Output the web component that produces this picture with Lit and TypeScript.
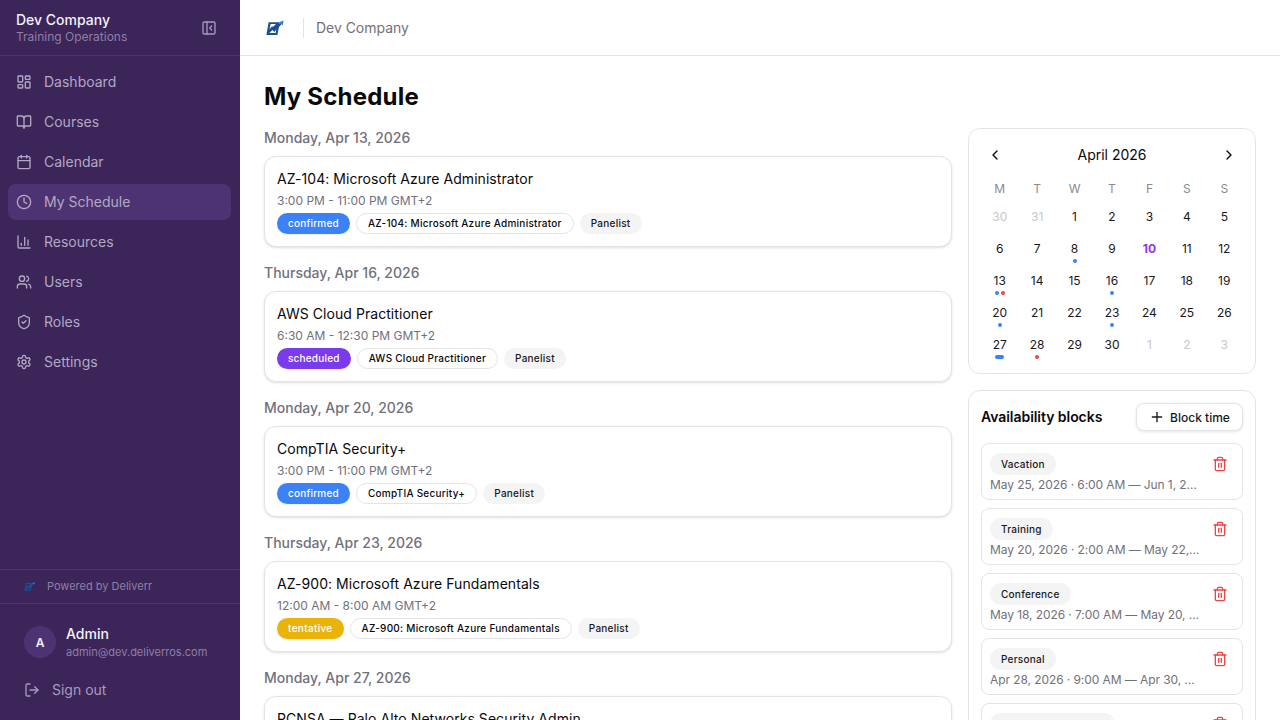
import { LitElement, html, css, svg } from "lit";
import { customElement } from "lit/decorators.js";

const ic = (body: unknown, size = 16) => html`<svg class="ic" width=${size} height=${size} viewBox="0 0 24 24" fill="none" stroke="currentColor" stroke-width="2" stroke-linecap="round" stroke-linejoin="round">${body}</svg>`;

const icons: Record<string, unknown> = {
  dashboard: svg`<rect x="3" y="3" width="7" height="9" rx="1"/><rect x="14" y="3" width="7" height="5" rx="1"/><rect x="14" y="12" width="7" height="9" rx="1"/><rect x="3" y="16" width="7" height="5" rx="1"/>`,
  book: svg`<path d="M12 7v14"/><path d="M3 18a1 1 0 0 1-1-1V4a1 1 0 0 1 1-1h5a4 4 0 0 1 4 4 4 4 0 0 1 4-4h5a1 1 0 0 1 1 1v13a1 1 0 0 1-1 1h-6a3 3 0 0 0-3 3 3 3 0 0 0-3-3z"/>`,
  calendar: svg`<path d="M8 2v4"/><path d="M16 2v4"/><rect x="3" y="4" width="18" height="18" rx="2"/><path d="M3 10h18"/>`,
  clock: svg`<circle cx="12" cy="12" r="10"/><polyline points="12 6 12 12 16 14"/>`,
  chart: svg`<path d="M3 3v16a2 2 0 0 0 2 2h16"/><path d="M18 17V9"/><path d="M13 17V5"/><path d="M8 17v-3"/>`,
  users: svg`<path d="M16 21v-2a4 4 0 0 0-4-4H6a4 4 0 0 0-4 4v2"/><circle cx="9" cy="7" r="4"/><path d="M22 21v-2a4 4 0 0 0-3-3.87"/><path d="M16 3.13a4 4 0 0 1 0 7.75"/>`,
  shield: svg`<path d="M20 13c0 5-3.5 7.5-7.66 8.95a1 1 0 0 1-.67-.01C7.5 20.5 4 18 4 13V6a1 1 0 0 1 1-1c2 0 4.5-1.2 6.24-2.72a1.17 1.17 0 0 1 1.52 0C14.51 3.81 17 5 19 5a1 1 0 0 1 1 1z"/><path d="m9 12 2 2 4-4"/>`,
  settings: svg`<path d="M12.22 2h-.44a2 2 0 0 0-2 2v.18a2 2 0 0 1-1 1.73l-.43.25a2 2 0 0 1-2 0l-.15-.08a2 2 0 0 0-2.73.73l-.22.38a2 2 0 0 0 .73 2.73l.15.1a2 2 0 0 1 1 1.72v.51a2 2 0 0 1-1 1.74l-.15.09a2 2 0 0 0-.73 2.73l.22.38a2 2 0 0 0 2.73.73l.15-.08a2 2 0 0 1 2 0l.43.25a2 2 0 0 1 1 1.73V20a2 2 0 0 0 2 2h.44a2 2 0 0 0 2-2v-.18a2 2 0 0 1 1-1.73l.43-.25a2 2 0 0 1 2 0l.15.08a2 2 0 0 0 2.73-.73l.22-.39a2 2 0 0 0-.73-2.73l-.15-.08a2 2 0 0 1-1-1.74v-.5a2 2 0 0 1 1-1.74l.15-.09a2 2 0 0 0 .73-2.73l-.22-.38a2 2 0 0 0-2.73-.73l-.15.08a2 2 0 0 1-2 0l-.43-.25a2 2 0 0 1-1-1.73V4a2 2 0 0 0-2-2z"/><circle cx="12" cy="12" r="3"/>`,
  panel: svg`<rect x="3" y="3" width="18" height="18" rx="2"/><path d="M9 3v18"/><path d="m16 15-3-3 3-3"/>`,
  logout: svg`<path d="M9 21H5a2 2 0 0 1-2-2V5a2 2 0 0 1 2-2h4"/><polyline points="16 17 21 12 16 7"/><line x1="21" y1="12" x2="9" y2="12"/>`,
  trash: svg`<path d="M3 6h18"/><path d="M19 6v14c0 1-1 2-2 2H7c-1 0-2-1-2-2V6"/><path d="M8 6V4c0-1 1-2 2-2h4c1 0 2 1 2 2v2"/><line x1="10" y1="11" x2="10" y2="17"/><line x1="14" y1="11" x2="14" y2="17"/>`,
  plus: svg`<path d="M5 12h14"/><path d="M12 5v14"/>`,
  left: svg`<path d="m15 18-6-6 6-6"/>`,
  right: svg`<path d="m9 18 6-6-6-6"/>`,
};

const logo = (w: number, h: number) => html`<svg class="logo" width=${w} height=${h} viewBox="0 0 20 18" fill="none">
  <path fill-rule="evenodd" d="M4.6 3.2h11.2L13.4 15.9H2.4zM6.6 5h5.4L5.2 11.6zM12.6 8.2 11.7 14H5.4l3-3 2.2 2z" fill="#1a4f96"/>
  <path d="M4.2 12.6 8.2 8.4l2.5 2.6L17 4.6" stroke="#1a4f96" stroke-width="1.7" fill="none"/>
  <path d="M15 3.2 19.6 1.4 18.8 6.2z" fill="#2a7fd0"/>
</svg>`;

const nav = [
  ["dashboard", "Dashboard"],
  ["book", "Courses"],
  ["calendar", "Calendar"],
  ["clock", "My Schedule"],
  ["chart", "Resources"],
  ["users", "Users"],
  ["shield", "Roles"],
  ["settings", "Settings"],
];

const events = [
  ["Monday, Apr 13, 2026", "AZ-104: Microsoft Azure Administrator", "3:00 PM - 11:00 PM GMT+2", "confirmed"],
  ["Thursday, Apr 16, 2026", "AWS Cloud Practitioner", "6:30 AM - 12:30 PM GMT+2", "scheduled"],
  ["Monday, Apr 20, 2026", "CompTIA Security+", "3:00 PM - 11:00 PM GMT+2", "confirmed"],
  ["Thursday, Apr 23, 2026", "AZ-900: Microsoft Azure Fundamentals", "12:00 AM - 8:00 AM GMT+2", "tentative"],
  ["Monday, Apr 27, 2026", "PCNSA — Palo Alto Networks Security Admin", "3:00 PM - 11:00 PM GMT+2", "confirmed"],
];

const blocks = [
  ["Vacation", "May 25, 2026 · 6:00 AM — Jun 1, 2026 · 6:00 PM"],
  ["Training", "May 20, 2026 · 2:00 AM — May 22, 2026 · 2:00 PM"],
  ["Conference", "May 18, 2026 · 7:00 AM — May 20, 2026 · 7:00 PM"],
  ["Personal", "Apr 28, 2026 · 9:00 AM — Apr 30, 2026 · 5:00 PM"],
  ["Professional training", "Apr 20, 2026 · 9:00 AM — Apr 22, 2026 · 5:00 PM"],
];

type Cell = { n: number; muted?: boolean; today?: boolean; marks?: string[] };
const cells: Cell[] = [
  { n: 30, muted: true }, { n: 31, muted: true }, { n: 1 }, { n: 2 }, { n: 3 }, { n: 4 }, { n: 5 },
  { n: 6 }, { n: 7 }, { n: 8, marks: ["blue"] }, { n: 9 }, { n: 10, today: true }, { n: 11 }, { n: 12 },
  { n: 13, marks: ["blue", "red"] }, { n: 14 }, { n: 15 }, { n: 16, marks: ["blue"] }, { n: 17 }, { n: 18 }, { n: 19 },
  { n: 20, marks: ["blue"] }, { n: 21 }, { n: 22 }, { n: 23, marks: ["blue"] }, { n: 24 }, { n: 25 }, { n: 26 },
  { n: 27, marks: ["wide"] }, { n: 28, marks: ["red"] }, { n: 29 }, { n: 30 }, { n: 1, muted: true }, { n: 2, muted: true }, { n: 3, muted: true },
];

@customElement("app-root")
export class AppRoot extends LitElement {
  static styles = css`
    :host { display: flex; width: 1280px; height: 720px; overflow: hidden; background: #fff; color: #09090b; font-family: Inter, "Liberation Sans", sans-serif; font-optical-sizing: none; }
    * { box-sizing: border-box; }
    .ic { display: block; flex: none; }
    .logo { display: block; flex: none; }
    .side { width: 240px; flex: none; height: 720px; background: #3b2559; display: flex; flex-direction: column; }
    .brand { height: 56px; flex: none; border-bottom: 1px solid #4c3569; padding: 0 23px 0 16px; display: flex; align-items: center; justify-content: space-between; }
    .brand-name { font-size: 14px; line-height: 18px; font-weight: 500; color: #f4f1f8; }
    .brand-sub { font-size: 12px; line-height: 16px; color: #8f7fa6; }
    .collapse { color: #a99bbd; }
    .nav { flex: 1; padding: 8px 9px 0 8px; display: flex; flex-direction: column; gap: 4px; }
    .item { height: 36px; border-radius: 8px; padding: 0 8px 0; display: flex; align-items: center; gap: 12px; font-size: 14px; font-weight: 400; color: #b3a8c4; }
    .item span { padding-bottom: 2px; }
    .item.on { background: #4e3373; }
    .powered { height: 35px; flex: none; border-top: 1px solid #4c3569; border-bottom: 1px solid #4c3569; padding: 0 0 0 23px; display: flex; align-items: center; gap: 12px; font-size: 11px; color: #8f7fa6; }
    .powered span { padding-bottom: 2px; }
    .user { flex: none; padding: 20px 24px 0; display: flex; align-items: center; gap: 10px; }
    .avatar { width: 32px; height: 32px; border-radius: 50%; background: #4e3373; color: #f4f1f8; font-size: 12px; font-weight: 600; display: flex; align-items: center; justify-content: center; }
    .uname { font-size: 14px; line-height: 20px; font-weight: 500; color: #f4f1f8; }
    .umail { font-size: 11px; line-height: 16px; color: #8f7fa6; }
    .signout { flex: none; height: 40px; margin: 10px 0 10px; padding: 0 0 0 24px; display: flex; align-items: center; gap: 12px; font-size: 14px; color: #a99bbd; }
    .signout span { padding-bottom: 2px; }
    .content { flex: 1; min-width: 0; display: flex; flex-direction: column; height: 720px; }
    .top { height: 56px; flex: none; border-bottom: 1px solid #e4e4e7; padding: 0 24px; display: flex; align-items: center; }
    .divider { width: 1px; height: 20px; background: #e4e4e7; margin: 0 12px 0 19px; }
    .crumb { font-size: 14px; color: #71717a; letter-spacing: -.03px; }
    .main { flex: 1; min-height: 0; overflow: hidden; padding: 25px 24px 24px; }
    h1 { margin: 0; font-size: 24px; line-height: 32px; font-weight: 700; letter-spacing: .2px; color: #09090b; }
    .cols { margin-top: 15px; display: grid; grid-template-columns: 688px 288px; gap: 16px; align-items: start; }
    .list { display: flex; flex-direction: column; gap: 16px; }
    .date { font-size: 14px; line-height: 20px; font-weight: 500; color: #71717a; margin-bottom: 8px; margin-top: 0; }
    .card { height: 91px; border: 1px solid #e4e4e7; border-radius: 12px; padding: 12px; background: #fff; box-shadow: 0 1px 3px rgba(0,0,0,.1), 0 1px 2px -1px rgba(0,0,0,.1); }
    .card-title { font-size: 14px; line-height: 20px; font-weight: 400; letter-spacing: .055px; }
    .card-time { font-size: 12px; line-height: 16px; color: #71717a; margin-top: 4px; }
    .badges { display: flex; gap: 6px; margin-top: 4px; }
    .badge { height: 21px; border-radius: 999px; padding: 0 11px 1px; font-size: 10px; font-weight: 500; display: inline-flex; align-items: center; letter-spacing: .2px; white-space: nowrap; }
    .confirmed { background: #3b82f6; color: #fff; box-shadow: 0 1px 2px rgba(0,0,0,.08); }
    .scheduled { background: #7c3aed; color: #fff; box-shadow: 0 1px 2px rgba(0,0,0,.08); }
    .tentative { background: #eab308; color: #fff; box-shadow: 0 1px 2px rgba(0,0,0,.08); letter-spacing: .32px; }
    .outline { border: 1px solid #e4e4e7; color: #09090b; background: #fff; letter-spacing: .26px; }
    .soft { background: #f4f4f5; color: #18181b; letter-spacing: .25px; }
    .aside { display: flex; flex-direction: column; gap: 16px; }
    .panel { border: 1px solid #e4e4e7; border-radius: 12px; background: #fff; }
    .cal { height: 246px; padding: 12px; }
    .cal-head { height: 28px; display: flex; align-items: center; justify-content: space-between; padding: 0 6px; font-size: 14px; font-weight: 400; }
    .cal-head span { padding-bottom: 2px; }
    .grid { display: grid; grid-template-columns: repeat(7, 1fr); margin: 7px 0 0; }
    .dow { height: 29px; padding-bottom: 5px; display: flex; align-items: center; justify-content: center; font-size: 12px; color: #8a8a93; }
    .cell { height: 32px; position: relative; display: flex; justify-content: center; padding-top: 4px; font-size: 12px; line-height: 16px; color: #18181b; }
    .cell.muted { color: #c8c8cc; }
    .cell.today { color: #9333ea; font-weight: 700; }
    .marks { position: absolute; left: 0; right: 0; bottom: 6px; display: flex; justify-content: center; gap: 2px; }
    .mark { width: 4px; height: 4px; border-radius: 50%; }
    .mark.blue { background: #3b82f6; }
    .mark.red { background: #ef4444; }
    .mark.wide { width: 9px; border-radius: 3px; background: #3b82f6; }
    .avail { padding: 12px; }
    .avail-head { display: flex; align-items: center; justify-content: space-between; height: 28px; }
    .avail-title { font-size: 14px; font-weight: 600; letter-spacing: -.05px; padding-bottom: 1px; }
    .btn { height: 28px; width: 107px; border: 1px solid #e4e4e7; border-radius: 8px; display: flex; align-items: center; justify-content: center; gap: 5px; font-size: 12px; font-weight: 500; background: #fff; box-shadow: 0 1px 3px rgba(0,0,0,.1); color: #18181b; }
    .blocks { margin-top: 12px; display: flex; flex-direction: column; gap: 8px; }
    .block { height: 57px; border: 1px solid #e4e4e7; border-radius: 8px; padding: 9px 14px 0 8px; display: flex; gap: 12px; }
    .block-main { flex: 1; min-width: 0; }
    .block-when { font-size: 12px; line-height: 16px; color: #71717a; margin-top: 2px; letter-spacing: -.08px; white-space: nowrap; overflow: hidden; text-overflow: ellipsis; }
    .block .ic { color: #ef4444; margin-top: 3px; }
    .block .badge { height: 22px; display: flex; width: fit-content; }
  `;

  render() {
    return html`
      <aside class="side">
        <div class="brand">
          <div>
            <div class="brand-name">Dev Company</div>
            <div class="brand-sub">Training Operations</div>
          </div>
          <span class="collapse">${ic(icons.panel)}</span>
        </div>
        <nav class="nav">
          ${nav.map(([i, label]) => html`<div class="item ${label === "My Schedule" ? "on" : ""}">${ic(icons[i])}<span>${label}</span></div>`)}
        </nav>
        <div class="powered">${logo(12, 11)}<span>Powered by Deliverr</span></div>
        <div class="user">
          <div class="avatar">A</div>
          <div>
            <div class="uname">Admin</div>
            <div class="umail">admin@dev.deliverros.com</div>
          </div>
        </div>
        <div class="signout">${ic(icons.logout)}<span>Sign out</span></div>
      </aside>
      <div class="content">
        <header class="top">${logo(20, 18)}<span class="divider"></span><span class="crumb">Dev Company</span></header>
        <main class="main">
          <h1>My Schedule</h1>
          <div class="cols">
            <div class="list">
              ${events.map(([d, t, w, s]) => html`<section>
                <div class="date">${d}</div>
                <div class="card">
                  <div class="card-title">${t}</div>
                  <div class="card-time">${w}</div>
                  <div class="badges">
                    <span class="badge ${s}">${s}</span>
                    <span class="badge outline">${t}</span>
                    <span class="badge soft">Panelist</span>
                  </div>
                </div>
              </section>`)}
            </div>
            <div class="aside">
              <div class="panel cal">
                <div class="cal-head">${ic(icons.left)}<span>April 2026</span>${ic(icons.right)}</div>
                <div class="grid">
                  ${["M", "T", "W", "T", "F", "S", "S"].map((d) => html`<div class="dow">${d}</div>`)}
                  ${cells.map((c) => html`<div class="cell ${c.muted ? "muted" : ""} ${c.today ? "today" : ""}">${c.n}${c.marks ? html`<div class="marks">${c.marks.map((m) => html`<span class="mark ${m}"></span>`)}</div>` : ""}</div>`)}
                </div>
              </div>
              <div class="panel avail">
                <div class="avail-head">
                  <span class="avail-title">Availability blocks</span>
                  <div class="btn">${ic(icons.plus)}<span>Block time</span></div>
                </div>
                <div class="blocks">
                  ${blocks.map(([k, w]) => html`<div class="block">
                    <div class="block-main">
                      <span class="badge soft">${k}</span>
                      <div class="block-when">${w}</div>
                    </div>
                    ${ic(icons.trash)}
                  </div>`)}
                </div>
              </div>
            </div>
          </div>
        </main>
      </div>
    `;
  }
}
